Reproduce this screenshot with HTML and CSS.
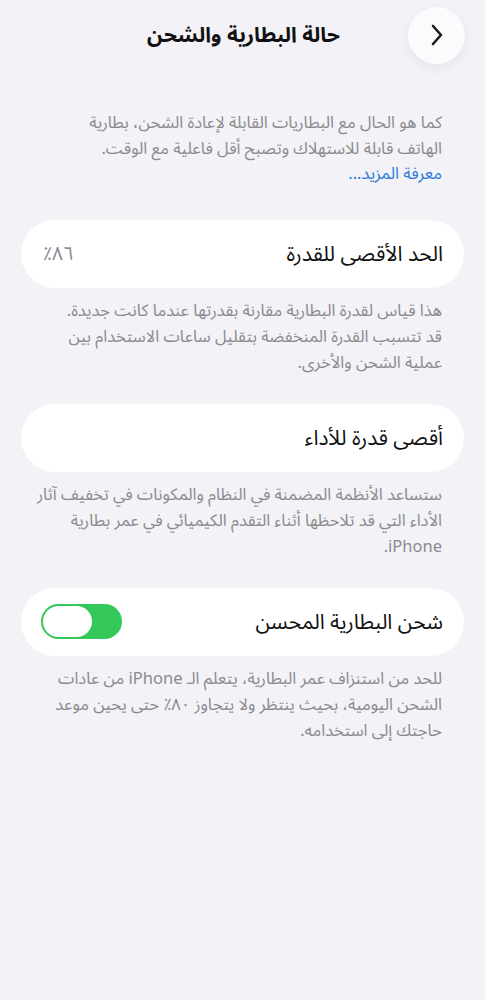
FILE: index.html
```html
<!DOCTYPE html>
<html lang="ar" dir="rtl">
<head>
    <meta charset="UTF-8">
    <meta name="viewport" content="width=device-width, initial-scale=1.0">
    <title>حالة البطارية والشحن</title>
    <link rel="stylesheet" href="styles.css">
</head>
<body>

<!-- شريط التنقل -->
<header class="navbar">
    <button class="back-btn" aria-label="رجوع">
        <svg width="18" height="24" viewBox="0 0 18 24">
            <path d="M5 3 L13 12 L5 21" fill="none" stroke="#1c1c1e" stroke-width="2.6" stroke-linecap="round" stroke-linejoin="round"/>
        </svg>
    </button>
    <h1 class="nav-title">حالة البطارية والشحن</h1>
    <span class="nav-spacer"></span>
</header>

<p class="intro">
    كما هو الحال مع البطاريات القابلة لإعادة الشحن، بطارية<br>
    الهاتف قابلة للاستهلاك وتصبح أقل فاعلية مع الوقت.<br>
    <a href="#" class="link">معرفة المزيد...</a>
</p>

<section class="group">
    <div class="cell">
        <span class="cell-title">الحد الأقصى للقدرة</span>
        <span class="cell-value">٨٦٪</span>
    </div>
    <p class="footer">
        هذا قياس لقدرة البطارية مقارنة بقدرتها عندما كانت جديدة.<br>
        قد تتسبب القدرة المنخفضة بتقليل ساعات الاستخدام بين<br>
        عملية الشحن والأخرى.
    </p>
</section>

<section class="group">
    <div class="cell">
        <span class="cell-title">أقصى قدرة للأداء</span>
    </div>
    <p class="footer">
        ستساعد الأنظمة المضمنة في النظام والمكونات في تخفيف آثار<br>
        الأداء التي قد تلاحظها أثناء التقدم الكيميائي في عمر بطارية<br>
        iPhone.
    </p>
</section>

<section class="group">
    <div class="cell">
        <span class="cell-title">شحن البطارية المحسن</span>
        <span class="toggle on"><span class="knob"></span></span>
    </div>
    <p class="footer">
        للحد من استنزاف عمر البطارية، يتعلم الـ iPhone من عادات<br>
        الشحن اليومية، بحيث ينتظر ولا يتجاوز ٨٠٪ حتى يحين موعد<br>
        حاجتك إلى استخدامه.
    </p>
</section>

</body>
</html>
```

FILE: styles.css
```css
/* الخلفية العامة للصفحة */
body {
    margin: 0;
    background-color: #f2f2f7;
    font-family: "Noto Sans Arabic", "DejaVu Sans", sans-serif;
    color: #111;
}

/* شريط التنقل */
.navbar {
    display: grid;
    grid-template-columns: 1fr auto 1fr;
    align-items: center;
    height: 70px;
    padding: 0 20px 0 22px;
}

.back-btn {
    justify-self: start;
    width: 57px;
    height: 57px;
    border-radius: 50%;
    border: none;
    background-color: #fbfbfd;
    box-shadow: 0 4px 14px rgba(0, 0, 0, 0.06);
    display: flex;
    align-items: center;
    justify-content: center;
    padding: 0;
}

.nav-title {
    margin: 0;
    font-size: 21px;
    font-weight: bold;
    color: #111;
}

/* نص المقدمة */
.intro {
    margin: 40px 43px 0 20px;
    font-size: 16.5px;
    line-height: 25.5px;
    color: #8a8a8e;
}

.link {
    color: #2b7ad6;
    text-decoration: none;
}

.group {
    margin-top: 33px;
}

.group + .group {
    margin-top: 28px;
}

/* الخلية البيضاء */
.cell {
    display: flex;
    align-items: center;
    justify-content: space-between;
    height: 68px;
    margin: 0 21px;
    padding: 0 21px 0 20px;
    background-color: #fff;
    border-radius: 34px;
}

.cell-title {
    font-size: 21px;
    color: #111;
}

.cell-value {
    font-size: 19px;
    color: #8a8a8e;
    padding-left: 2px;
}

.footer {
    margin: 10px 43px 0 20px;
    font-size: 16.5px;
    line-height: 26px;
    color: #8a8a8e;
}

/* مفتاح التبديل */
.toggle {
    width: 81px;
    height: 35px;
    border-radius: 18px;
    background-color: #34c759;
    display: flex;
    align-items: center;
    padding: 0 2px;
    box-sizing: border-box;
}

.toggle.on {
    justify-content: flex-end;
}

.knob {
    width: 49px;
    height: 31px;
    border-radius: 16px;
    background-color: #fff;
}
```
